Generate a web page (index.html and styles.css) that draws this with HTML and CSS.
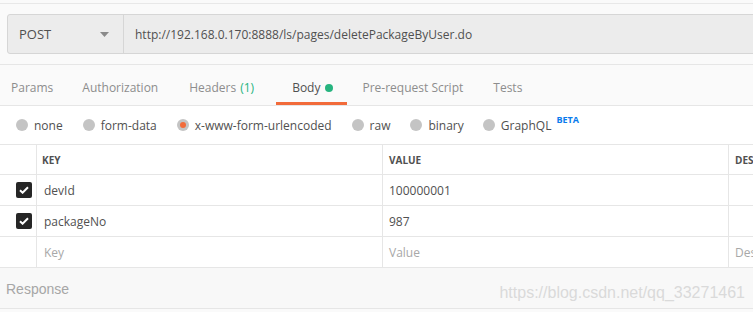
FILE: index.html
```html
<!DOCTYPE html>
<html>
<head>
<meta charset="utf-8">
<link rel="stylesheet" href="styles.css">
</head>
<body>
<div class="top-strip"></div>
<div class="request-area">
  <div class="request-bar">
    <div class="method">
      <span>POST</span>
      <svg class="caret" width="9" height="5" viewBox="0 0 9 5"><path d="M0 0h9L4.5 5z" fill="#8a8a8a"/></svg>
    </div>
    <div class="url">http://192.168.0.170:8888/ls/pages/deletePackageByUser.do</div>
  </div>
</div>
<div class="tabs">
  <div class="tab t-params">Params</div>
  <div class="tab t-auth">Authorization</div>
  <div class="tab t-headers">Headers <span class="count">(1)</span></div>
  <div class="tab t-body active">Body <span class="dot"></span></div>
  <div class="tab t-pre">Pre-request Script</div>
  <div class="tab t-tests">Tests</div>
</div>
<div class="body-types">
  <label class="radio r-none"><span class="circle"></span>none</label>
  <label class="radio r-form"><span class="circle"></span>form-data</label>
  <label class="radio r-url"><span class="circle selected"></span>x-www-form-urlencoded</label>
  <label class="radio r-raw"><span class="circle"></span>raw</label>
  <label class="radio r-bin"><span class="circle"></span>binary</label>
  <label class="radio r-gql"><span class="circle"></span>GraphQL<sup class="beta">BETA</sup></label>
</div>
<div class="kv-table">
  <div class="row head">
    <div class="cell check"></div>
    <div class="cell key">KEY</div>
    <div class="cell value">VALUE</div>
    <div class="cell desc">DES</div>
  </div>
  <div class="row">
    <div class="cell check"><span class="box"><svg width="10" height="8" viewBox="0 0 10 8"><path d="M1 4.2l2.6 2.5L9 1.2" stroke="#fff" stroke-width="2" fill="none"/></svg></span></div>
    <div class="cell key">devId</div>
    <div class="cell value">100000001</div>
    <div class="cell desc"></div>
  </div>
  <div class="row">
    <div class="cell check"><span class="box"><svg width="10" height="8" viewBox="0 0 10 8"><path d="M1 4.2l2.6 2.5L9 1.2" stroke="#fff" stroke-width="2" fill="none"/></svg></span></div>
    <div class="cell key">packageNo</div>
    <div class="cell value">987</div>
    <div class="cell desc"></div>
  </div>
  <div class="row placeholder">
    <div class="cell check"></div>
    <div class="cell key">Key</div>
    <div class="cell value">Value</div>
    <div class="cell desc">Des</div>
  </div>
</div>
<div class="response">
  <span class="resp-title">Response</span>
  <span class="watermark">https://blog.csdn.net/qq_33271461</span>
</div>
</body>
</html>
```

FILE: styles.css
```css
* { box-sizing: border-box; }
html, body { margin: 0; padding: 0; }
body {
  width: 753px;
  height: 312px;
  overflow: hidden;
  background: #fafafa;
  font-family: "Open Sans", "Noto Sans", sans-serif;
  font-size: 12px;
  color: #505050;
}
.top-strip {
  height: 4px;
  border-bottom: 1px solid #e8e8e8;
}
.request-area {
  padding: 10px 0 10px 7px;
  border-bottom: 1px solid #e6e6e6;
}
.request-bar {
  display: flex;
  height: 40px;
  width: 800px;
  background: #ececec;
  border: 1px solid #d6d6d6;
  border-radius: 3px 0 0 3px;
}
.method {
  width: 116px;
  flex: none;
  display: flex;
  align-items: center;
  justify-content: space-between;
  padding: 0 14px 0 11px;
  border-right: 1px solid #d6d6d6;
  font-size: 13px;
  color: #505050;
}
.url {
  display: flex;
  align-items: center;
  padding-left: 11px;
  font-size: 12px;
  color: #505050;
}
.tabs {
  display: flex;
  height: 41px;
  border-bottom: 1px solid #e6e6e6;
  padding-left: 11px;
}
.tab {
  display: flex;
  align-items: center;
  color: #8d8d8d;
  font-size: 12px;
  padding-top: 8px;
  border-bottom: 3px solid transparent;
}
.t-params { margin-right: 29px; }
.t-auth { margin-right: 31px; }
.t-headers { margin-right: 22px; }
.t-body { padding: 8px 14px 0 16px; margin-right: 15px; }
.t-pre { margin-right: 30px; }
.tab.active {
  color: #505050;
  border-bottom-color: #f26b3a;
}
.count { color: #26b47f; margin-left: 4px; }
.dot {
  display: inline-block;
  width: 8px;
  height: 8px;
  border-radius: 50%;
  background: #26b47f;
  margin-left: 5px;
}
.body-types {
  display: flex;
  align-items: center;
  height: 39px;
  background: #fff;
  padding: 0 0 0 16px;
  border-bottom: 1px solid #e6e6e6;
}
.radio {
  display: flex;
  align-items: center;
  color: #505050;
  font-size: 12px;
  margin-right: 21px;
}
.r-none { margin-right: 20px; }
.r-form { margin-right: 20px; }
.r-url { margin-right: 20px; }
.r-raw { margin-right: 20px; }
.r-bin { margin-right: 19px; }
.circle {
  width: 12px;
  height: 12px;
  border-radius: 50%;
  background: #c4c4c4;
  margin-right: 6px;
  position: relative;
}
.circle.selected::after {
  content: "";
  position: absolute;
  left: 3px;
  top: 3px;
  width: 6px;
  height: 6px;
  border-radius: 50%;
  background: #f26b3a;
}
.beta {
  color: #097bed;
  font-size: 9px;
  font-weight: 700;
  margin-left: 5px;
  position: relative;
  top: -6px;
  vertical-align: baseline;
}
.kv-table { background: #fff; }
.row {
  display: flex;
  height: 31px;
  border-bottom: 1px solid #e6e6e6;
}
.row.head { height: 30px; }
.cell {
  display: flex;
  align-items: center;
  font-size: 12px;
  color: #505050;
  white-space: nowrap;
  overflow: hidden;
}
.cell.check {
  width: 36px;
  flex: none;
  justify-content: flex-end;
  padding-right: 4px;
}
.cell.key {
  width: 346px;
  flex: none;
  border-left: 1px solid #e6e6e6;
  padding-left: 7px;
}
.cell.value {
  width: 346px;
  flex: none;
  border-left: 1px solid #e6e6e6;
  padding-left: 6px;
}
.cell.desc {
  flex: 1;
  border-left: 1px solid #e6e6e6;
  padding-left: 6px;
}
.head .cell {
  font-size: 10px;
  font-weight: 700;
  color: #505050;
  padding-top: 1px;
}
.head .cell.key { padding-left: 5px; }
.head .cell.value { padding-left: 6px; }
.placeholder .cell { color: #a8a8a8; }
.box {
  width: 16px;
  height: 16px;
  border-radius: 2px;
  background: #262626;
  display: flex;
  align-items: center;
  justify-content: center;
}
.response {
  display: flex;
  align-items: center;
  justify-content: space-between;
  height: 41px;
  padding: 0 8px 0 6px;
  background: #f8f8f8;
  border-bottom: 1px solid #e6e6e6;
}
.resp-title {
  font-family: "Liberation Sans", Arial, sans-serif;
  font-size: 14px;
  color: #a6a6a6;
  margin-top: 2px;
}
.watermark {
  font-family: "Liberation Sans", Arial, sans-serif;
  font-size: 16px;
  color: #dadada;
  margin-top: 10px;
}
```
